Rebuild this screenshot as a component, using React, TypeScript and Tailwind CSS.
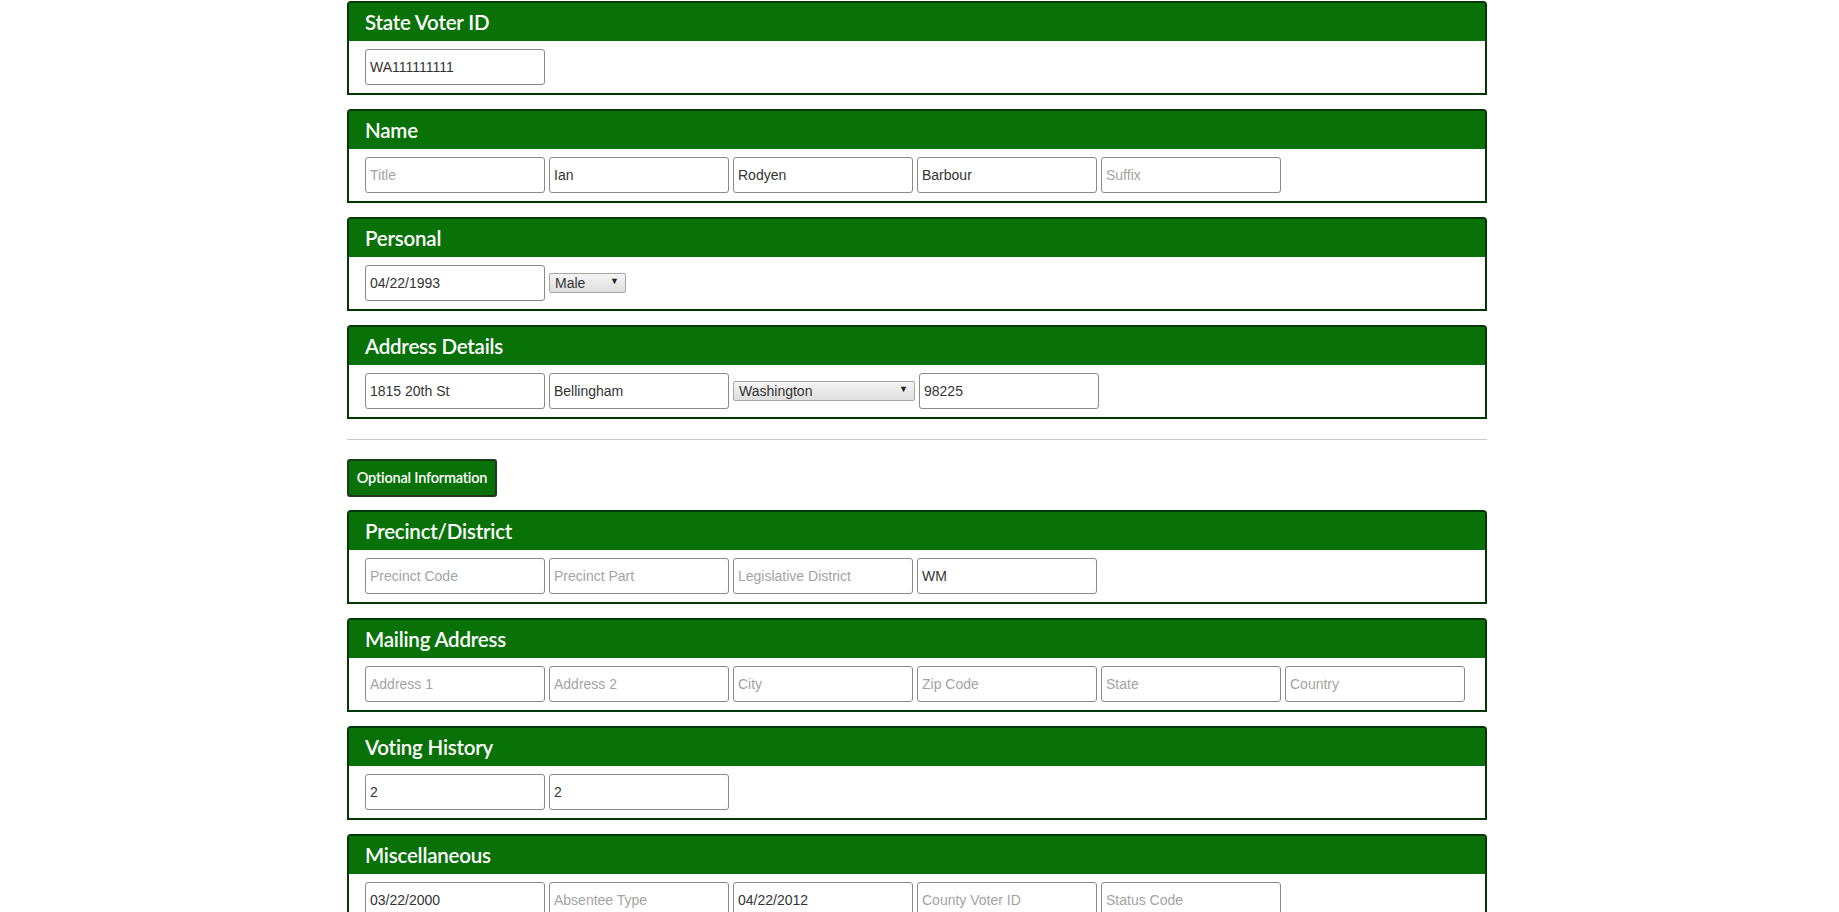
import React from 'react';

const headFont = { fontFamily: 'Lato, "Open Sans", sans-serif' };

type Field = { value?: string; placeholder?: string; select?: string; selectWidth?: string };

const Input = ({ value, placeholder }: { value?: string; placeholder?: string }) => (
  <input
    defaultValue={value}
    placeholder={placeholder}
    className="w-[180px] h-[36px] px-[4px] border border-[#8a8a8a] rounded-[3px] bg-white text-[14px] text-[#333] placeholder:text-[#a3a3a3] outline-none font-['Liberation_Sans',Arial,sans-serif]"
  />
);

const Select = ({ value, width }: { value: string; width: string }) => (
  <div
    className={`relative h-[20px] ${width} border border-[#a6a6a6] rounded-[2px] bg-gradient-to-b from-[#f4f4f4] to-[#dedede] flex items-center px-[5px] text-[14px] text-[#333] font-['Liberation_Sans',Arial,sans-serif]`}
  >
    <span>{value}</span>
    <span className="absolute right-[6px] top-[1px] text-[9px] text-[#222]">▼</span>
  </div>
);

const Card = ({ title, fields }: { title: string; fields: Field[] }) => (
  <div className="w-[1140px] mb-[14px] border-2 border-[#023602] rounded-t-[4px] bg-white">
    <div
      className="h-[38px] bg-[#087208] flex items-center pl-[16px] pr-[15px] text-white text-[20.5px] font-semibold tracking-[-0.2px]"
      style={headFont}
    >
      {title}
    </div>
    <div className="flex items-center gap-[4px] pl-[16px] py-[8px]">
      {fields.map((f, i) =>
        f.select ? (
          <Select key={i} value={f.select} width={f.selectWidth || 'w-[66px]'} />
        ) : (
          <Input key={i} value={f.value} placeholder={f.placeholder} />
        )
      )}
    </div>
  </div>
);

export default function App() {
  return (
    <div className="min-h-screen bg-white">
      <div className="w-[1145px] mx-auto pt-[1px]">
        <Card title="State Voter ID" fields={[{ value: 'WA111111111' }]} />
        <Card
          title="Name"
          fields={[
            { placeholder: 'Title' },
            { value: 'Ian' },
            { value: 'Rodyen' },
            { value: 'Barbour' },
            { placeholder: 'Suffix' },
          ]}
        />
        <Card title="Personal" fields={[{ value: '04/22/1993' }, { select: 'Male', selectWidth: 'w-[77px]' }]} />
        <Card
          title="Address Details"
          fields={[
            { value: '1815 20th St' },
            { value: 'Bellingham' },
            { select: 'Washington', selectWidth: 'w-[182px]' },
            { value: '98225' },
          ]}
        />
        <hr className="w-[1140px] mt-[20px] border-0 border-t border-[#c8c8c8]" />
        <button
          className="mt-[19px] w-[150px] h-[38px] bg-[#087208] border-2 border-[#1d3a1d] rounded-[3px] text-white text-[14.5px] font-semibold tracking-[-0.2px]"
          style={headFont}
        >
          Optional Information
        </button>
        <div className="mt-[13px]">
          <Card
            title="Precinct/District"
            fields={[
              { placeholder: 'Precinct Code' },
              { placeholder: 'Precinct Part' },
              { placeholder: 'Legislative District' },
              { value: 'WM' },
            ]}
          />
          <Card
            title="Mailing Address"
            fields={[
              { placeholder: 'Address 1' },
              { placeholder: 'Address 2' },
              { placeholder: 'City' },
              { placeholder: 'Zip Code' },
              { placeholder: 'State' },
              { placeholder: 'Country' },
            ]}
          />
          <Card title="Voting History" fields={[{ value: '2' }, { value: '2' }]} />
          <Card
            title="Miscellaneous"
            fields={[
              { value: '03/22/2000' },
              { placeholder: 'Absentee Type' },
              { value: '04/22/2012' },
              { placeholder: 'County Voter ID' },
              { placeholder: 'Status Code' },
            ]}
          />
        </div>
      </div>
    </div>
  );
}
